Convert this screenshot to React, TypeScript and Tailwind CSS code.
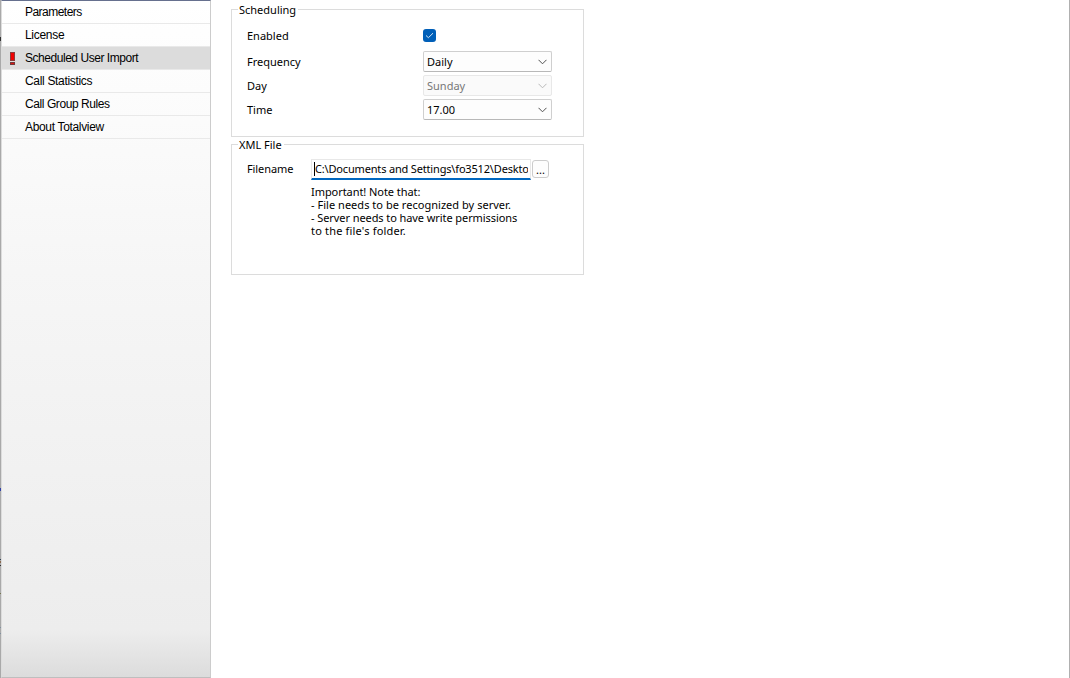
import { ReactNode, useState } from 'react';

interface NavItem {
  label: string;
  spacing: string;
  warning?: boolean;
}

const navItems: NavItem[] = [
  { label: 'Parameters', spacing: 'tracking-[-0.53px]' },
  { label: 'License', spacing: 'tracking-[-0.3px]' },
  { label: 'Scheduled User Import', spacing: 'tracking-[-0.46px]', warning: true },
  { label: 'Call Statistics', spacing: 'tracking-[-0.32px]' },
  { label: 'Call Group Rules', spacing: 'tracking-[-0.42px]' },
  { label: 'About Totalview', spacing: 'tracking-[-0.33px]' },
];

function WarningIcon() {
  return (
    <svg width="6" height="13" viewBox="0 0 6 13" shapeRendering="crispEdges">
      <rect x="0" y="0" width="5" height="9" fill="#8a3a3a" />
      <rect x="1" y="1" width="3" height="7" fill="#f00000" />
      <rect x="0" y="10" width="5" height="3" fill="#703c3c" />
      <rect x="1" y="11" width="3" height="1" fill="#e01010" />
    </svg>
  );
}

function Sidebar({ selected, onSelect }: { selected: string; onSelect: (label: string) => void }) {
  return (
    <aside className="flex h-full w-[211px] shrink-0">
      {/* Window edge */}
      <div className="w-px bg-[#a9a9a9]">
        <div className="mt-[37px] h-[4px] bg-[#303030]" />
        <div className="mt-[447px] h-[3px] bg-[#3040a8]" />
        <div className="mt-[68px] h-px bg-[#304050]" />
        <div className="mt-px h-[2px] bg-[#8a6a50]" />
        <div className="mt-[2px] h-px bg-[#303030]" />
        <div className="mt-[27px] h-px bg-[#75754f]" />
        <div className="mt-[33px] h-px bg-[#8090a0]" />
        <div className="mt-[5px] h-px bg-[#8090a0]" />
      </div>
      <div className="flex flex-1 flex-col border border-t-[#66708e] border-r-[#cccccc] border-b-[#bebebe] border-l-[#dcdcdc] bg-[linear-gradient(to_bottom,#ffffff_0%,#f6f6f6_40%,#ededed_93%,#dcdcdc_100%)]">
        {navItems.map((item) => (
          <button
            key={item.label}
            onClick={() => onSelect(item.label)}
            className={`flex h-[23px] shrink-0 items-center border-b border-[#e9e9e9] text-left font-['Liberation_Sans',Arial,sans-serif] text-[12px] leading-[22px] text-black ${
              item.label === selected ? 'bg-[#dcdcdc]' : ''
            }`}
          >
            <span className="flex w-[23px] shrink-0 pl-2">{item.warning && <WarningIcon />}</span>
            <span className={`whitespace-nowrap ${item.spacing}`}>{item.label}</span>
          </button>
        ))}
      </div>
    </aside>
  );
}

function GroupBox({ title, className, children }: { title: string; className: string; children: ReactNode }) {
  return (
    <section className={`relative w-[353px] border border-[#dcdcdc] ${className}`}>
      <h2 className="absolute -top-[8px] left-[6px] bg-white pr-[2px] pl-px leading-[16px]">{title}</h2>
      {children}
    </section>
  );
}

function Field({ label, className, children }: { label: string; className: string; children: ReactNode }) {
  return (
    <div className={`flex items-center ${className}`}>
      <span className="w-[176px]">{label}</span>
      {children}
    </div>
  );
}

function Dropdown({ value, disabled = false }: { value: string; disabled?: boolean }) {
  return (
    <button
      disabled={disabled}
      className={`flex h-[21px] w-[129px] items-center justify-between rounded-[2px] border pr-1 pl-[3px] text-left ${
        disabled
          ? 'border-[#e8e8e8] bg-[#fafafa] text-[#777777]'
          : 'border-[#cfcfcf] border-b-[#b8b8b8] bg-[#fdfdfd] text-black'
      }`}
    >
      <span>{value}</span>
      <svg
        className="mt-px"
        width="9"
        height="6"
        viewBox="0 0 9 6"
        fill="none"
        stroke={disabled ? '#b8b8b8' : '#505050'}
      >
        <path d="M.5 .8 4.5 4.8 8.5 .8" />
      </svg>
    </button>
  );
}

export default function App() {
  const [selected, setSelected] = useState('Scheduled User Import');
  const [enabled, setEnabled] = useState(true);

  return (
    <div className="flex h-screen overflow-hidden border-r border-[#b0b0b0] bg-white font-['Noto_Sans','Open_Sans',sans-serif] text-[11px] leading-[13px] text-black">
      <Sidebar selected={selected} onSelect={setSelected} />

      <main className="ml-5 flex flex-col gap-[7px] pt-[9px]">
        <GroupBox title="Scheduling" className="h-[128px] pt-[15px] pl-[15px]">
          <Field label="Enabled" className="mb-[4px] h-5">
            <button
              role="checkbox"
              aria-checked={enabled}
              onClick={() => setEnabled(!enabled)}
              className="flex size-[13px] items-center justify-center rounded-[3px] bg-[#005fb8]"
            >
              {enabled && (
                <svg width="9" height="7" viewBox="0 0 9 7" fill="none" stroke="#d5e6f5">
                  <path d="M1 3.5 3.4 5.7 8 1.2" />
                </svg>
              )}
            </button>
          </Field>
          <Field label="Frequency" className="h-6">
            <Dropdown value="Daily" />
          </Field>
          <Field label="Day" className="h-6">
            <Dropdown value="Sunday" disabled />
          </Field>
          <Field label="Time" className="h-6">
            <Dropdown value="17.00" />
          </Field>
        </GroupBox>

        <GroupBox title="XML File" className="h-[131px] pt-[14px] pl-[15px]">
          <div className="flex items-center">
            <span className="-mt-[2px] w-[64px] tracking-[-0.1px]">Filename</span>
            <div className="flex h-[21px] w-[220px] items-center border border-b-2 border-[#e8e8e8] border-b-[#0067c0] pr-[2px] pl-[2px]">
              <span className="h-[14px] w-px shrink-0 bg-black" />
              <span className="-mt-px overflow-hidden leading-[17px] tracking-[-0.17px] whitespace-nowrap">
                C:\Documents and Settings\fo3512\Deskto
              </span>
            </div>
            <button className="-mt-px ml-[1px] flex h-[18px] w-[17px] items-center justify-center rounded-[3px] border border-[#cccccc] bg-[#fdfdfd]">
              ...
            </button>
          </div>
          <p className="mt-[5px] ml-[64px] tracking-[-0.06px] whitespace-nowrap">
            Important! Note that:
            <br />
            <span className="tracking-[0.03px]">- File needs to be recognized by server.</span>
            <br />
            <span className="tracking-[-0.08px]">- Server needs to have write permissions</span>
            <br />
            <span className="tracking-[0.18px]">to the file's folder.</span>
          </p>
        </GroupBox>
      </main>
    </div>
  );
}
